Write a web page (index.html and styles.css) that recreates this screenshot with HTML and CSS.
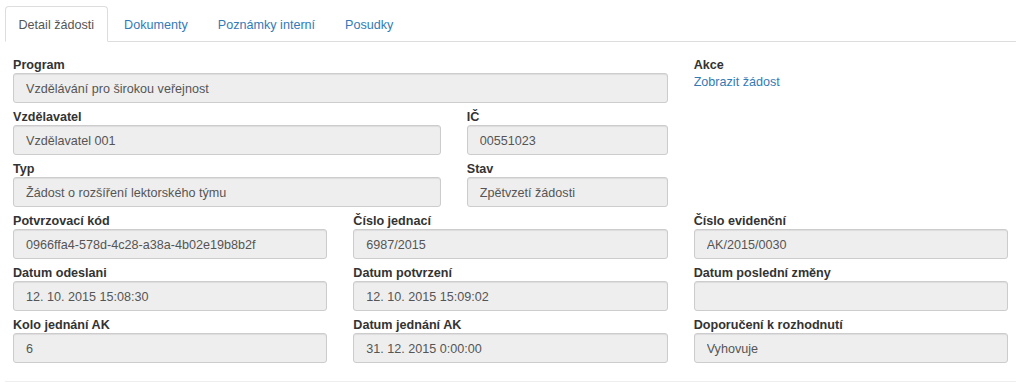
FILE: index.html
```html
<!DOCTYPE html>
<html lang="cs">
<head>
  <meta charset="UTF-8" />
  <meta name="viewport" content="width=device-width, initial-scale=1" />
  <title>Detail žádosti</title>
  <link rel="stylesheet" href="styles.css">
</head>
<body>
  <div class="wrapper">
    <ul class="tabs">
      <li class="tab active"><a href="#">Detail žádosti</a></li>
      <li class="tab"><a href="#">Dokumenty</a></li>
      <li class="tab"><a href="#">Poznámky interní</a></li>
      <li class="tab"><a href="#">Posudky</a></li>
    </ul>

    <div class="pane">
      <div class="grid">
        <div class="span-2 grid">
          <div class="field span-3">
            <label>Program</label>
            <input type="text" readonly value="Vzdělávání pro širokou veřejnost" />
          </div>
          <div class="field span-2">
            <label>Vzdělavatel</label>
            <input type="text" readonly value="Vzdělavatel 001" />
          </div>
          <div class="field">
            <label>IČ</label>
            <input type="text" readonly value="00551023" />
          </div>
          <div class="field span-2">
            <label>Typ</label>
            <input type="text" readonly value="Žádost o rozšíření lektorského týmu" />
          </div>
          <div class="field">
            <label>Stav</label>
            <input type="text" readonly value="Zpětvzetí žádosti" />
          </div>
        </div>

        <div class="field">
          <label>Akce</label>
          <a class="action" href="#">Zobrazit žádost</a>
        </div>

        <div class="field">
          <label>Potvrzovací kód</label>
          <input type="text" readonly value="0966ffa4-578d-4c28-a38a-4b02e19b8b2f" />
        </div>
        <div class="field">
          <label>Číslo jednací</label>
          <input type="text" readonly value="6987/2015" />
        </div>
        <div class="field">
          <label>Číslo evidenční</label>
          <input type="text" readonly value="AK/2015/0030" />
        </div>

        <div class="field">
          <label>Datum odeslani</label>
          <input type="text" readonly value="12. 10. 2015 15:08:30" />
        </div>
        <div class="field">
          <label>Datum potvrzení</label>
          <input type="text" readonly value="12. 10. 2015 15:09:02" />
        </div>
        <div class="field">
          <label>Datum poslední změny</label>
          <input type="text" readonly value="" />
        </div>

        <div class="field">
          <label>Kolo jednání AK</label>
          <input type="text" readonly value="6" />
        </div>
        <div class="field">
          <label>Datum jednání AK</label>
          <input type="text" readonly value="31. 12. 2015 0:00:00" />
        </div>
        <div class="field">
          <label>Doporučení k rozhodnutí</label>
          <input type="text" readonly value="Vyhovuje" />
        </div>
      </div>
    </div>
  </div>
</body>
</html>
```

FILE: styles.css
```css
body {
  margin: 0;
  font-family: "Liberation Sans", Arial, sans-serif;
  font-size: 12.6px;
  color: #333;
  background: #fff;
}
.wrapper {
  margin-left: 5px;
  width: 1011px;
  padding-top: 6px;
}
.tabs {
  list-style: none;
  margin: 0;
  padding: 0;
  display: flex;
  border-bottom: 1px solid #ddd;
}
.tab {
  margin-right: 3px;
  margin-bottom: -1px;
}
.tab a {
  display: block;
  padding: 9px 12.5px 7px;
  line-height: 18px;
  border: 1px solid transparent;
  border-radius: 4px 4px 0 0;
  color: #337ab7;
  text-decoration: none;
}
.tab.active a {
  color: #555;
  background: #fff;
  border-color: #ddd #ddd transparent;
}
.pane {
  padding: 9px 8px 18px;
  border-bottom: 1px solid #eee;
}
.grid {
  display: grid;
  grid-template-columns: repeat(3, 1fr);
  column-gap: 26px;
}
.span-2 {
  grid-column: span 2;
}
.span-3 {
  grid-column: span 3;
}
.field {
  padding-top: 6px;
  min-width: 0;
}
.field label {
  display: block;
  font-weight: bold;
  line-height: 16px;
}
.field input {
  display: block;
  width: 100%;
  height: 30px;
  box-sizing: border-box;
  padding: 1px 12px 0;
  font-family: inherit;
  font-size: 12.6px;
  color: #555;
  background: #eee;
  border: 1px solid #ccc;
  border-radius: 3px;
  box-shadow: inset 0 1px 1px rgba(0,0,0,0.075);
  outline: none;
}
.action {
  display: block;
  line-height: 17px;
  margin-top: 1px;
  color: #337ab7;
  text-decoration: none;
}
```
